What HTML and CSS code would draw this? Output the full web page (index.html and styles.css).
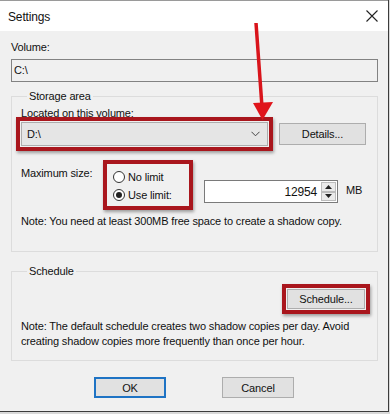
FILE: index.html
```html
<!DOCTYPE html>
<html>
<head>
<meta charset="utf-8">
<link rel="stylesheet" href="styles.css">
</head>
<body>
<div class="dialog">
  <div class="titlebar">
    <span class="title">Settings</span>
    <svg class="close" width="12" height="12" viewBox="0 0 12 12"><path d="M0.5 0.5 L11.5 11.5 M11.5 0.5 L0.5 11.5" stroke="#222" stroke-width="1.1" fill="none"/></svg>
  </div>
  <div class="content">
    <div class="label">Volume:</div>
    <div class="textbox">C:\</div>

    <fieldset class="group storage">
      <legend>Storage area</legend>
      <div class="label sub">Located on this volume:</div>
      <div class="row combo-row">
        <div class="mark mark-combo">
          <div class="combo"><span>D:\</span>
            <svg width="9" height="6" viewBox="0 0 9 6"><path d="M0.5 0.8 L4.5 4.8 L8.5 0.8" stroke="#444" stroke-width="1" fill="none"/></svg>
          </div>
        </div>
        <div class="button details">Details...</div>
      </div>
      <div class="row size-row">
        <div class="label maxlabel">Maximum size:</div>
        <div class="mark mark-radio">
          <div class="radio"><span class="circle"></span>No limit</div>
          <div class="radio"><span class="circle checked"></span>Use limit:</div>
        </div>
        <div class="spin">
          <span class="value">12954</span>
          <div class="spinbtns">
            <div class="sb"><svg width="7" height="4" viewBox="0 0 7 4"><path d="M0 4 L3.5 0 L7 4 Z" fill="#222"/></svg></div>
            <div class="sb"><svg width="7" height="4" viewBox="0 0 7 4"><path d="M0 0 L3.5 4 L7 0 Z" fill="#222"/></svg></div>
          </div>
        </div>
        <span class="unit">MB</span>
      </div>
      <div class="note">Note: You need at least 300MB free space to create a shadow copy.</div>
    </fieldset>

    <fieldset class="group schedule">
      <legend>Schedule</legend>
      <div class="sched-row">
        <div class="mark mark-sched"><div class="button sched">Schedule...</div></div>
      </div>
      <div class="note two">Note: The default schedule creates two shadow copies per day. Avoid<br>creating shadow copies more frequently than once per hour.</div>
    </fieldset>

    <div class="footer">
      <div class="button ok">OK</div>
      <div class="button cancel">Cancel</div>
    </div>
  </div>
</div>
<svg class="arrow" width="40" height="110" viewBox="0 0 40 110">
  <path d="M16 0 L22 84" stroke="#d9141b" stroke-width="3.5" fill="none" stroke-linecap="round"/>
  <path d="M13 80 L33 79 L22.5 97 Z" fill="#e0141b"/>
</svg>
</body>
</html>
```
FILE: styles.css
```css
html, body {
  margin: 0;
  padding: 0;
}
body {
  width: 390px;
  height: 414px;
  background: #d9d9d9;
  font-family: "Liberation Sans", Arial, sans-serif;
  font-size: 11px;
  letter-spacing: -0.15px;
  color: #111;
  position: relative;
  overflow: hidden;
}
.dialog {
  background: #f0f0f0;
  border-right: 1px solid #3c3c3c;
  border-bottom: 1px solid #3c3c3c;
  box-sizing: border-box;
  width: 389px;
  height: 412px;
}
.titlebar {
  height: 31px;
  background: #fff;
  border-top: 1px solid #9a9a9a;
  box-sizing: border-box;
  display: flex;
  align-items: center;
  justify-content: space-between;
  padding: 0 8px 0 8px;
}
.title {
  font-size: 12px;
  color: #111;
  margin-top: 1px;
}
.close {
  margin-right: 2px;
}
.content {
  padding: 9px 10px 0 11px;
}
.label {
  line-height: 14px;
  white-space: nowrap;
}
.textbox {
  margin-top: 5px;
  height: 23px;
  border: 1px solid #828282;
  box-sizing: border-box;
  background: #f0f0f0;
  padding: 3px 2px;
  line-height: 15px;
}
.group {
  margin: 7px 0 0 0;
  padding: 0 9px 0 9px;
  border: 1px solid #dcdcdc;
  min-width: 0;
}
.group legend {
  margin-left: 6px;
  padding: 0 2px;
  line-height: 14px;
  color: #111;
}
.storage {
  padding-bottom: 22px;
}
.sub {
  margin-top: 3px;
}
.row {
  display: flex;
  align-items: center;
}
.mark {
  border: 4px solid #a9161d;
  padding: 1px;
  box-shadow: 1px 2px 3px rgba(0,0,0,0.35);
}
.combo-row {
  margin-left: -5px;
  margin-top: -3px;
}
.combo {
  width: 247px;
  height: 24px;
  box-sizing: border-box;
  background: #e5e5e5;
  border: 1px solid #adadad;
  display: flex;
  align-items: center;
  justify-content: space-between;
  padding: 0 7px 0 5px;
}
.button {
  background: #e1e1e1;
  border: 1px solid #adadad;
  box-sizing: border-box;
  display: flex;
  align-items: center;
  justify-content: center;
  height: 22px;
}
.details {
  width: 87px;
  margin-left: 6px;
}
.size-row {
  margin-top: 9px;
  align-items: flex-start;
}
.maxlabel {
  width: 77px;
  margin-top: 6px;
}
.mark-radio {
  width: 90px;
  height: 50px;
  box-sizing: border-box;
  padding: 4px 0 0 6px;
  margin-left: 5px;
}
.radio {
  display: flex;
  align-items: center;
  height: 18px;
  white-space: nowrap;
}
.circle {
  width: 12px;
  height: 12px;
  border: 1px solid #333;
  border-radius: 50%;
  box-sizing: border-box;
  background: #fff;
  margin-right: 3px;
  position: relative;
}
.circle.checked::after {
  content: "";
  position: absolute;
  left: 2px;
  top: 2px;
  width: 6px;
  height: 6px;
  border-radius: 50%;
  background: #222;
}
.spin {
  margin-left: 11px;
  margin-top: 20px;
  width: 134px;
  height: 23px;
  box-sizing: border-box;
  border: 1px solid #7a7a7a;
  background: #fff;
  display: flex;
  align-items: center;
  justify-content: flex-end;
  padding-right: 1px;
}
.value {
  margin-right: 4px;
  font-size: 12px;
}
.spinbtns {
  display: flex;
  flex-direction: column;
  width: 15px;
  height: 19px;
}
.sb {
  flex: 1;
  border: 1px solid #bcbcbc;
  background: #eaeaea;
  display: flex;
  align-items: center;
  justify-content: center;
}
.unit {
  margin-left: 8px;
  margin-top: 24px;
}
.note {
  margin-top: 4px;
  line-height: 15px;
  white-space: nowrap;
}
.schedule {
  margin-top: 12px;
  padding-bottom: 11px;
}
.sched-row {
  display: flex;
  justify-content: flex-end;
  margin-top: 6px;
  margin-right: -2px;
}
.mark-sched {
  padding: 1px;
}
.sched {
  width: 78px;
  height: 20px;
}
.note.two {
  margin-top: 5px;
}
.footer {
  display: flex;
  margin-top: 16px;
  padding-left: 83px;
  gap: 56px;
}
.footer .button {
  width: 72px;
  height: 21px;
}
.ok {
  border: 2px solid #1e73c4;
}
.arrow {
  position: absolute;
  left: 240px;
  top: 23px;
}
```
